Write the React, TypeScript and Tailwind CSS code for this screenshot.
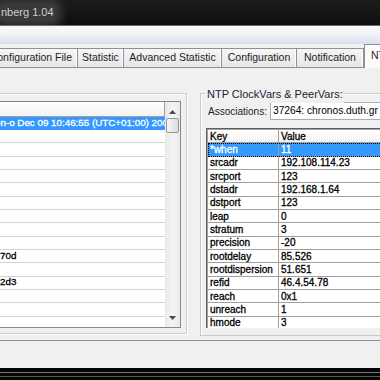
const TABS = [
  { label: 'onfiguration File', width: 'w-[78px] justify-end pr-[5px]' },
  { label: 'Statistic', width: 'w-[46px] justify-center' },
  { label: 'Advanced Statistic', width: 'w-[98px] justify-center' },
  { label: 'Configuration', width: 'w-[75px] justify-center' },
  { label: 'Notification', width: 'w-[67px] justify-center' },
];

const LIST_ROWS = [
  'en-o Dec 09 10:46:55 (UTC+01:00) 2009',
  '',
  '',
  '',
  '',
  '',
  '',
  '',
  '',
  '',
  '70d',
  '',
  '2d3',
  '',
  '',
  '',
];

const VARS: [string, string][] = [
  ['*when', '11'],
  ['srcadr', '192.108.114.23'],
  ['srcport', '123'],
  ['dstadr', '192.168.1.64'],
  ['dstport', '123'],
  ['leap', '0'],
  ['stratum', '3'],
  ['precision', '-20'],
  ['rootdelay', '85.526'],
  ['rootdispersion', '51.651'],
  ['refid', '46.4.54.78'],
  ['reach', '0x1'],
  ['unreach', '1'],
  ['hmode', '3'],
];

function Arrow({ down }: { down?: boolean }) {
  return (
    <svg width="7" height="4" viewBox="0 0 7 4" className="block">
      <path d={down ? 'M0 0h7L3.5 4z' : 'M3.5 0L7 4H0z'} fill="#4a4a4a" />
    </svg>
  );
}

export default function App() {
  return (
    <div className="w-[380px] h-[380px] overflow-hidden flex flex-col bg-[#f0f0f0] font-['Liberation_Sans',Arial,sans-serif] text-black">
      {/* caption */}
      <div className="h-[25px] shrink-0 bg-gradient-to-b from-[#1c1c1c] to-[#0e0e0e] flex items-center">
        <span className="ml-[-1px] text-[11px] text-[#cfcfcf] rounded-[6px] bg-[#3a3a3a] px-[2px] shadow-[0_0_8px_6px_#3a3a3a]">
          nberg 1.04
        </span>
      </div>
      <div className="h-px shrink-0 bg-[#6b6b6b]" />
      <div className="h-[18px] shrink-0 bg-gradient-to-b from-[#f7f9fc] via-[#eef2f7] to-[#d8e0ea]" />

      {/* tabs */}
      <div className="h-[23px] shrink-0 flex items-end text-[10.5px] text-[#1e1e22]">
        {TABS.map((t) => (
          <div
            key={t.label}
            className={`${t.width} h-[19px] shrink-0 flex items-center whitespace-nowrap border-t border-r border-[#8e9096] bg-gradient-to-b from-[#f6f6f6] to-[#e6e6e6] shadow-[inset_-1px_0_0_#fff]`}
          >
            {t.label}
          </div>
        ))}
        <div className="relative z-10 -mb-px h-[24px] w-[40px] shrink-0 border-l border-t border-[#8e9096] bg-[#fbfbfb] pl-[6px] pt-[3px] whitespace-nowrap">
          NTP
        </div>
      </div>

      {/* tab page */}
      <div className="h-[274px] shrink-0 border-y border-[#8e9096] bg-[#f0f0f0] flex items-start pt-[25px] text-[10px]">
        {/* left group */}
        <div className="w-[187px] h-[241px] shrink-0 border-t border-r border-b border-[#c9c9c9] shadow-[inset_0_1px_0_#fff,1px_1px_0_#fff] pt-[7px] pr-[5px]">
          <div className="h-[227px] border-t border-r border-b border-[#828790] bg-white flex">
            <div className="flex-1 min-w-0 overflow-hidden flex flex-col">
              <div className="h-[14.7px] shrink-0 border-b border-r border-[#a0a0a0] bg-gradient-to-b from-white to-[#f3f3f3]" />
              {LIST_ROWS.map((r, i) => (
                <div
                  key={i}
                  className={`h-[13.33px] shrink-0 border-b flex items-center whitespace-nowrap overflow-hidden text-[9.8px] [-webkit-text-stroke:0.3px_currentColor] ${
                    i === 0 ? 'bg-[#3399ff] text-white border-[#3399ff]' : 'border-[#d2d2d2]'
                  }`}
                >
                  <span className={i === 0 ? 'ml-[-5px]' : 'ml-0'}>{r}</span>
                </div>
              ))}
            </div>
            <div className="w-[15px] shrink-0 bg-gradient-to-r from-[#e9e9e9] via-[#f4f4f4] to-[#e9e9e9] flex flex-col items-center">
              <div className="h-[16px] flex items-center pt-[3px]">
                <Arrow />
              </div>
              <div className="w-[13px] h-[15px] rounded-[2px] border border-[#979797] bg-gradient-to-r from-[#f6f6f6] to-[#dcdcdc]" />
              <div className="flex-1" />
              <div className="h-[16px] flex items-center pb-[2px]">
                <Arrow down />
              </div>
            </div>
          </div>
        </div>

        {/* right group */}
        <div className="relative ml-[13px] w-[200px] h-[243px] shrink-0 border-l border-t border-b border-[#c9c9c9] shadow-[inset_1px_1px_0_#fff] pt-[8px] pl-[5px]">
          <span className="absolute left-[5px] top-[-8px] bg-[#f0f0f0] px-px text-[11px] text-[#1d2333] whitespace-nowrap">
            NTP ClockVars &amp; PeerVars:
          </span>
          <div className="h-[18px] flex items-center">
            <span className="w-[64px] shrink-0 pl-[2px] text-[#1e1e1e]">Associations:</span>
            <div className="flex-1 h-full border border-[#a9abb2] bg-white flex items-center pl-[2px] whitespace-nowrap text-[10.2px]">
              37264: chronos.duth.gr
            </div>
          </div>
          <div className="mt-[8px] h-[200px] border-l border-t border-[#5e5e5e] bg-white overflow-hidden">
            <div className="h-full border-l border-t border-[#a0a0a0] flex flex-col">
              <div className="h-[13.3px] shrink-0 flex border-b border-[#a0a0a0] bg-gradient-to-b from-white to-[#f2f2f2] [-webkit-text-stroke:0.3px_#000]">
                <div className="w-[71px] shrink-0 border-r border-[#a0a0a0] pl-[2px] flex items-center">Key</div>
                <div className="flex-1 pl-[2px] flex items-center">Value</div>
              </div>
              {VARS.map(([k, v], i) => (
                <div
                  key={k}
                  className={`h-[13.33px] shrink-0 flex border-b border-[#a0a0a0] [-webkit-text-stroke:0.3px_currentColor] ${
                    i === 0 ? 'bg-[#3399ff] text-white outline outline-1 outline-dotted -outline-offset-1 outline-black' : ''
                  }`}
                >
                  <div className="w-[71px] shrink-0 border-r border-[#a0a0a0] pl-[2px] flex items-center">{k}</div>
                  <div className="flex-1 pl-[2px] flex items-center">{v}</div>
                </div>
              ))}
            </div>
          </div>
        </div>
      </div>

      <div className="flex-1" />
      <div className="h-[12px] shrink-0 flex flex-col bg-[#050505]">
        <div className="h-[4px]" />
        <div className="h-px bg-[#777]" />
        <div className="h-[3px]" />
        <div className="h-px bg-[#5a5a5a]" />
      </div>
    </div>
  );
}
